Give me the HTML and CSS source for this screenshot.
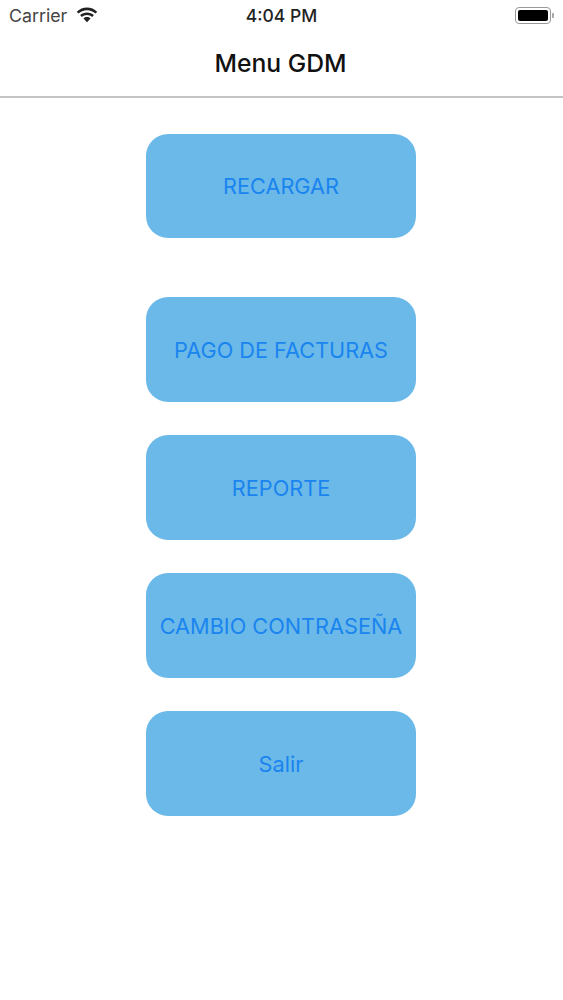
FILE: index.html
```html
<!DOCTYPE html>
<html lang="en">
<head>
<meta charset="UTF-8">
<meta name="viewport" content="width=device-width, initial-scale=1.0">
<title>Menu GDM</title>
<link rel="stylesheet" href="styles.css">
</head>
<body>
<div class="status-bar">
<div class="status-left">
<span class="carrier">Carrier</span>
<svg class="wifi" width="22" height="16" viewBox="0 0 22 16">
<path d="M11 3.2c3.3 0 6.3 1.300 8.500 3.400l1.700-1.900C18.500 2.100 14.900.500 11 .5S3.500 2.100.8 4.700l1.700 1.900C4.700 4.500 7.700 3.200 11 3.200z" fill="#222"/>
<path d="M11 7.900c2 0 3.800.8 5.200 2l1.700-1.900C16.100 6.400 13.700 5.400 11 5.400s-5.100 1-6.900 2.600l1.700 1.900c1.400-1.200 3.200-2 5.200-2z" fill="#222"/>
<path d="M11 10.100c-1.400 0-2.600.5-3.500 1.400L11 15.300l3.500-3.800c-.9-.9-2.100-1.400-3.500-1.400z" fill="#222"/>
</svg>
</div>
<span class="time">4:04 PM</span>
<div class="battery">
<div class="battery-body"><div class="battery-fill"></div></div>
<div class="battery-cap"></div>
</div>
</div>
<div class="nav-bar">
<h1>Menu GDM</h1>
</div>
<div class="menu">
<a href="#" class="menu-btn first">RECARGAR</a>
<a href="#" class="menu-btn">PAGO DE FACTURAS</a>
<a href="#" class="menu-btn">REPORTE</a>
<a href="#" class="menu-btn">CAMBIO CONTRASEÑA</a>
<a href="#" class="menu-btn">Salir</a>
</div>
</body>
</html>
```

FILE: styles.css
```css
body {
  margin: 0;
  padding: 0;
  height: 1000px;
  background-color: #fff;
  font-family: Inter, "Liberation Sans", sans-serif;
}

.status-bar {
  height: 31px;
  display: flex;
  justify-content: space-between;
  align-items: center;
  position: relative;
  padding: 0 9px 0 9px;
  box-sizing: border-box;
  color: #333;
}

.status-left {
  display: flex;
  align-items: center;
  gap: 9px;
}

.carrier {
  font-size: 17.800px;
  color: #444;
}

.wifi {
  margin-top: -2px;
}

.time {
  position: absolute;
  left: 0;
  right: 0;
  text-align: center;
  font-size: 17.500px;
  font-weight: 500;
  color: #222;
}

.battery {
  display: flex;
  align-items: center;
  gap: 1px;
}

.battery-body {
  width: 36px;
  height: 17px;
  box-sizing: border-box;
  padding: 2px;
  border: 1px solid #999;
  border-radius: 4px;
}

.battery-fill {
  height: 100%;
  background-color: #000;
  border-radius: 2px;
}

.battery-cap {
  width: 2px;
  height: 5px;
  background-color: #aaa;
  border-radius: 0 1px 1px 0;
}

.nav-bar {
  height: 65px;
  display: flex;
  justify-content: center;
  align-items: center;
  border-bottom: 2px solid #c4c4c4;
}

h1 {
  margin: 0 2px 2px 0;
  font-size: 24.700px;
  font-weight: 500;
  color: #111;
}

.menu {
  display: flex;
  flex-direction: column;
  align-items: center;
  gap: 33px;
  padding: 36px 1px 0 0;
}

.menu-btn {
  width: 270px;
  height: 105px;
  display: flex;
  justify-content: center;
  align-items: center;
  background-color: #6bb9e8;
  border-radius: 22px;
  color: #1a84ef;
  font-size: 21.700px;
  text-decoration: none;
  white-space: nowrap;
}

.first {
  height: 104px;
  margin-bottom: 26px;
}
```
